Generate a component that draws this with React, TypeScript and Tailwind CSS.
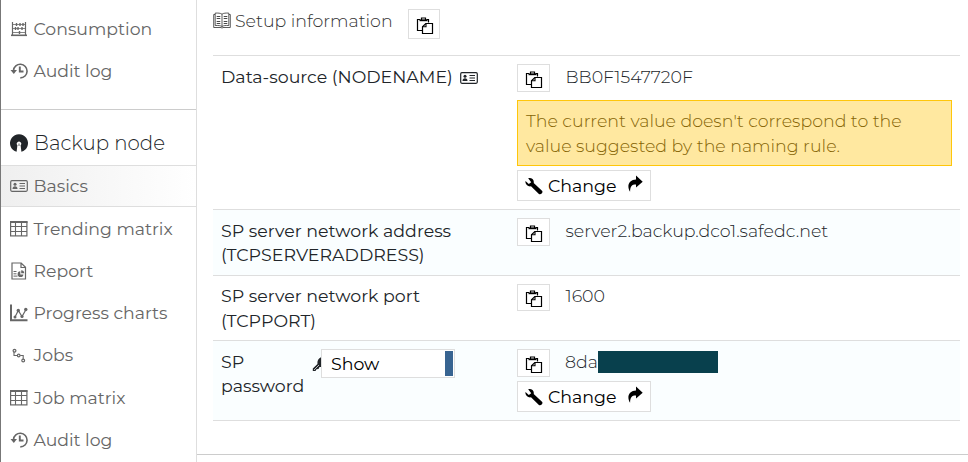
import type { ReactNode } from "react";

function Svg({ children, w = 18, h = 18, className = "" }: { children: ReactNode; w?: number; h?: number; className?: string }) {
  return (
    <svg width={w} height={h} viewBox={`0 0 ${w} ${h}`} fill="none" stroke="currentColor" className={`shrink-0 ${className}`}>
      {children}
    </svg>
  );
}

const Abacus = () => (
  <Svg>
    <path d="M2.500 2v13M15.500 2v13" strokeWidth="1.200" />
    <path d="M1 15.300h16" strokeWidth="1.600" />
    <path d="M2 4.500h14M2 8.500h14M2 12.500h14" strokeWidth="0.800" />
    <path d="M6.500 3v3M10 3v3M13 3v3M5.500 7v3M8 7v3M12 7v3M9.500 11v3" strokeWidth="1.400" />
  </Svg>
);

const History = () => (
  <Svg>
    <path d="M3.500 8.500A6.800 6.800 0 1 1 10.300 15.900" strokeWidth="1.600" />
    <path d="M0.500 8h6.500L3.800 12z" fill="currentColor" stroke="none" />
    <path d="M9.800 4.500v5h3.700" strokeWidth="1.900" />
  </Svg>
);

const Keyhole = () => (
  <Svg>
    <path d="M6.600 17.800A9 9 0 1 1 11.400 17.800L10.600 11.300A2.200 2.200 0 1 0 7.400 11.300z" fill="currentColor" stroke="none" />
    <path d="M9 9.500v2.500" strokeWidth="0.700" />
  </Svg>
);

const Card = () => (
  <Svg h={12}>
    <rect x="0.700" y="0.700" width="16.600" height="10.600" rx="1.200" strokeWidth="1.200" />
    <circle cx="5" cy="4.300" r="1.500" fill="currentColor" stroke="none" />
    <path d="M2.500 9c0-2 1-2.800 2.500-2.800S7.500 7 7.500 9z" fill="currentColor" stroke="none" />
    <path d="M9.500 3.500H15M9.500 6H15M9.500 8.500H15" strokeWidth="1.100" />
  </Svg>
);

const Grid = () => (
  <Svg h={16}>
    <rect x="0.600" y="0.600" width="16.300" height="14.300" strokeWidth="1.200" />
    <path d="M0 1.200h17.500" strokeWidth="1.600" />
    <path d="M1 5.500h16M1 10.500h16M5.500 1v14M11.500 1v14" strokeWidth="1.100" />
  </Svg>
);

const Report = () => (
  <Svg>
    <path d="M2 1h9.200l4.300 4.200V17H2zM11 1v4.500h4.500" strokeWidth="1.200" />
    <path d="M3.500 9.500h3M3.500 11.800h3M3.500 14.100h4" strokeWidth="1" />
    <path d="M10.300 9.300A2.900 2.900 0 1 0 13.400 12.400H10.300z" fill="currentColor" stroke="none" />
    <path d="M11.200 8.300v3h3a3 3 0 0 0-3-3z" fill="currentColor" stroke="none" />
  </Svg>
);

const Chart = () => (
  <Svg>
    <path d="M1 0.500v15.800h16.500" strokeWidth="2" />
    <path d="M5 13L8.300 6.500l3.700 6 4-7" strokeWidth="1.200" />
    <g fill="currentColor" stroke="none">
      <circle cx="5" cy="13" r="1.500" />
      <circle cx="8.300" cy="6.500" r="1.700" />
      <circle cx="12" cy="12.500" r="1.600" />
      <circle cx="15.800" cy="5.500" r="1.700" />
    </g>
  </Svg>
);

const Jobs = () => (
  <Svg>
    <path d="M4 4.800v3.700h3.200M10.200 8.500h3v4" strokeWidth="1.100" />
    <circle cx="4.500" cy="3.700" r="1.400" strokeWidth="1.200" />
    <circle cx="8.700" cy="8.500" r="1.300" strokeWidth="1.200" />
    <circle cx="13.200" cy="13.500" r="1.400" strokeWidth="1.200" />
  </Svg>
);

const Book = () => (
  <Svg h={17}>
    <path d="M9 2.200C7.500 1 5 1 2.200 1.100v12.400c3-.1 5.300 0 6.800 1 1.500-1 3.800-1.100 6.800-1V1.100C13 1 10.500 1 9 2.200zM9 2.200v12.300" strokeWidth="0.800" />
    <path d="M2 2.500H.7v13H8l1 .6 1-.6h7.300v-13H16" strokeWidth="0.800" />
    <path d="M3.700 4.500h3.600M3.700 6.500h3.600M3.700 9.500h3.600M3.700 11.500h3.600M10.700 4.500h3.600M10.700 6.500h3.600M10.700 9.500h3.600M10.700 11.500h3.600" strokeWidth="0.900" />
  </Svg>
);

const Paste = () => (
  <Svg>
    <path d="M6 13.500H1.500v-11H4M10.500 2.500h2V5.500" strokeWidth="1.200" />
    <path d="M3.500 3.300h8" strokeWidth="1.800" />
    <path d="M5.500 3V1h4v2" strokeWidth="1.200" />
    <path d="M9.800 6.500h6.700v10H6.500V9.800z" fill="white" strokeWidth="1.200" />
    <path d="M10 6.500v3.300H6.500" strokeWidth="1.100" />
  </Svg>
);

const Wrench = () => (
  <Svg>
    <path d="M3.200 1.200c3-.9 6.300 1.300 5.500 4.800l8.300 7.700c1.600 1.700-1.300 4.800-3.100 3.200L6 9.300C3 9.900-.1 7.500.5 4l3.300 2.900 2.400-1.700z" fill="currentColor" stroke="none" />
  </Svg>
);

const Forward = () => (
  <Svg w={16}>
    <path d="M9 .5l6.700 6.300-6.700 5.800V9.400C5.300 9.200 3 11 3.100 16.800c-4-6.300-.5-12.300 5.900-12.300z" fill="currentColor" stroke="none" />
  </Svg>
);

const Key = () => (
  <Svg w={9} h={18}>
    <path d="M.8 16V13.500L5.500 9C5 5.500 6.500 3 10 2v10L7.500 12 6.500 14l-2 .3L3.500 16z" fill="currentColor" stroke="none" />
    <path d="M2 15L7 10" stroke="#fafeff" strokeWidth="0.700" />
  </Svg>
);

function CopyButton({ className = "h-[28px] w-[33px]" }: { className?: string }) {
  return (
    <button className={`flex shrink-0 items-center justify-center border border-[#dedede] bg-white pl-px pt-[3px] text-black ${className}`}>
      <Paste />
    </button>
  );
}

function ChangeButton() {
  return (
    <button className="flex h-[31px] w-[134px] items-center border border-[#dedede] bg-white pl-[7px] pt-px text-black">
      <Wrench />
      <span className="ml-[5px] w-[79px] pt-px text-left">Change</span>
      <span className="-mt-[4px]"><Forward /></span>
    </button>
  );
}

function NavItem({ icon, children, className = "h-[42.2px]" }: { icon: ReactNode; children: ReactNode; className?: string }) {
  return (
    <a className={`flex items-center gap-[5.5px] pl-[9px] ${className}`}>
      {icon}
      <span>{children}</span>
    </a>
  );
}

export default function App() {
  return (
    <div className="flex h-[462px] w-[968px] overflow-hidden whitespace-nowrap bg-white font-['Montserrat','Inter',sans-serif] text-[17.400px] font-normal leading-[24.400px] text-[#212529]">
      <nav className="h-full w-[197px] shrink-0 border-l border-r border-l-[#777] border-r-[#dedede] text-[17.300px] text-[#666]">
        <div className="h-[110px] border-b border-[#ccc] pt-[8px]">
          <NavItem icon={<Abacus />}>Consumption</NavItem>
          <NavItem icon={<History />}>Audit log</NavItem>
        </div>
        <div className="flex h-[55px] items-center gap-[6px] pl-[9px] pt-[11px] text-[19.800px] font-light text-[#212529]">
          <Keyhole />
          <span>Backup node</span>
        </div>
        <NavItem icon={<Card />} className="mb-[0.700px] h-[42.200px] border-y border-[#dedede] bg-linear-to-r from-[#efefef] to-white">Basics</NavItem>
        <NavItem icon={<Grid />}>Trending matrix</NavItem>
        <NavItem icon={<Report />}>Report</NavItem>
        <NavItem icon={<Chart />}>Progress charts</NavItem>
        <NavItem icon={<Jobs />}>Jobs</NavItem>
        <NavItem icon={<Grid />}>Job matrix</NavItem>
        <NavItem icon={<History />}>Audit log</NavItem>
      </nav>
      <main className="h-[455px] flex-1 border-b border-[#ccc] pl-4 pr-2">
        <header className="flex h-[55px] items-start text-[#333]">
          <div className="flex h-[42px] items-center gap-[4px]">
            <span className="-mt-[2px]"><Book /></span>
            <span className="w-[173px] font-light">Setup information</span>
          </div>
          <CopyButton className="mt-[9px] h-[30px] w-[32px]" />
        </header>

        <section className="flex h-[154px] border-t border-[#dedede] px-2 pt-[9px]">
          <div className="flex w-[296px] items-start gap-[8px]">
            <span className="w-[231px]">Data-source (NODENAME)</span>
            <span className="mt-[7px] flex"><Card /></span>
          </div>
          <div className="flex-1">
            <div className="flex gap-[15.500px]">
              <CopyButton className="-mt-px h-[28px] w-[33px]" />
              <span className="font-light">BB0F1547720F</span>
            </div>
            <div className="mt-[8px] h-[66px] border border-[#ffc60a] bg-[#ffe8a0] pl-2 pt-[7px] font-light leading-[25px] text-[#856404]">
              <p>The current value doesn't correspond to the</p>
              <p>value suggested by the naming rule.</p>
            </div>
            <div className="mt-[4px]"><ChangeButton /></div>
          </div>
        </section>

        <section className="flex h-[66px] border-t border-[#dedede] bg-[#fafeff] px-2 pt-[9px]">
          <div className="w-[296px]">
            <p>SP server network address</p>
            <p>(TCPSERVERADDRESS)</p>
          </div>
          <CopyButton className="-mt-px h-[28px] w-[33px]" />
          <span className="ml-[15.500px] font-light">server2.backup.dco1.safedc.net</span>
        </section>

        <section className="flex h-[65px] border-t border-[#dedede] px-2 pt-[8px]">
          <div className="w-[296px] leading-[24.600px]">
            <p>SP server network port</p>
            <p>(TCPPORT)</p>
          </div>
          <CopyButton className="h-[27px] w-[33px]" />
          <span className="ml-[15.500px] font-light">1600</span>
        </section>

        <section className="flex h-[81px] border-y border-[#dedede] bg-[#fafeff] px-2 pt-[8px]">
          <div className="flex w-[296px] items-start">
            <div className="w-[91px] pt-px leading-[24px]">
              <p>SP</p>
              <p>password</p>
            </div>
            <span className="mt-[6px]"><Key /></span>
            <button className="flex h-[29px] w-[134px] items-center justify-between border border-[#dedede] bg-white pl-[9px] pr-px text-black">
              <span className="pt-px">Show</span>
              <span className="h-[25px] w-[8px] bg-[#386491]" />
            </button>
          </div>
          <div>
            <div className="flex">
              <CopyButton />
              <span className="ml-[15px] w-[33px] pt-px font-light">8da</span>
              <span className="mt-[2px] h-[22px] w-[120px] bg-[#08404d]" />
            </div>
            <div className="mt-[4px]"><ChangeButton /></div>
          </div>
        </section>
      </main>
    </div>
  );
}
